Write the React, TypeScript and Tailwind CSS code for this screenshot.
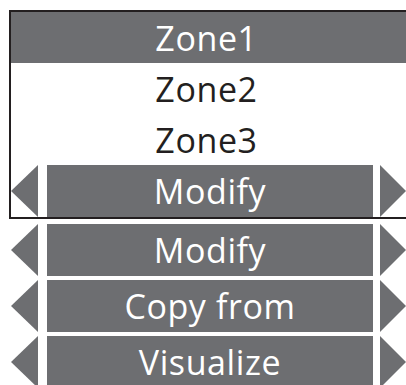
import React from "react";

function LeftArrow() {
  return (
    <svg width="27" height="52" viewBox="0 0 27 52" className="shrink-0">
      <polygon points="27,0 27,52 0,26" fill="#6d6e71" />
    </svg>
  );
}

function RightArrow() {
  return (
    <svg width="26" height="52" viewBox="0 0 26 52" className="shrink-0">
      <polygon points="0,0 26,26 0,52" fill="#6d6e71" />
    </svg>
  );
}

function ArrowBar({ label }: { label: string }) {
  return (
    <div className="flex h-[52px] items-center">
      <LeftArrow />
      <div className="ml-[9px] flex h-full w-[326px] shrink-0 items-center justify-center bg-[#6d6e71] text-white">
        {label}
      </div>
      <div className="ml-[7px] shrink-0">
        <RightArrow />
      </div>
    </div>
  );
}

export default function App() {
  return (
    <div
      className="h-[385px] w-[406px] overflow-hidden bg-white pt-[10px] text-[34px] leading-none tracking-[0.6px] text-[#231f20]"
      style={{ fontFamily: '"Open Sans", "Noto Sans", sans-serif' }}
    >
      <div className="-mr-[20px] ml-[9px] border-b-2 border-l-2 border-t-2 border-solid border-[#231f20]">
        <div className="flex h-[51px] items-center justify-center bg-[#6d6e71] pr-[24px] text-white">
          Zone1
        </div>
        <div className="flex h-[51px] items-center justify-center pr-[24px]">Zone2</div>
        <div className="flex h-[51px] items-center justify-center pr-[24px]">Zone3</div>
        <ArrowBar label="Modify" />
      </div>
      <div className="ml-[11px] mt-[5px] flex flex-col gap-[4px]">
        <ArrowBar label="Modify" />
        <ArrowBar label="Copy from" />
        <ArrowBar label="Visualize" />
      </div>
    </div>
  );
}
